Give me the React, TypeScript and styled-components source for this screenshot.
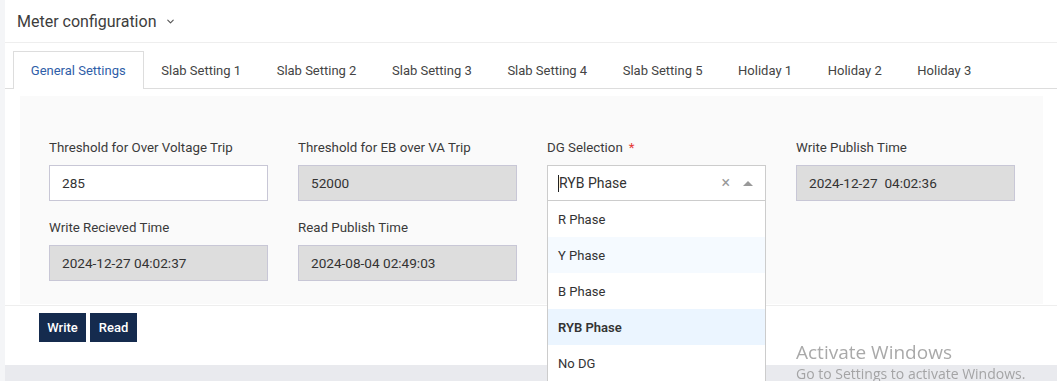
import React from "react";
import styled, { createGlobalStyle } from "styled-components";

const GlobalStyle = createGlobalStyle`
  html, body {
    margin: 0;
    padding: 0;
    background: #f4f5f7;
    font-family: Roboto, "Liberation Sans", Arial, sans-serif;
    overflow: hidden;
  }
  * { box-sizing: border-box; }
`;

const Page = styled.div`
  height: 381px;
  padding-left: 5px;
  background: #f4f5f7;
  display: flex;
  flex-direction: column;
`;

const Card = styled.div`
  background: #ffffff;
  height: 365px;
  flex-shrink: 0;
  display: flex;
  flex-direction: column;
`;

const Footer = styled.div`
  flex: 1;
  background: #e9eaee;
`;

const Header = styled.div`
  height: 43px;
  display: flex;
  align-items: center;
  gap: 9px;
  padding-left: 12px;
  border-bottom: 1px solid #eeeeee;
  font-size: 16px;
  color: #3d3d3d;
`;

const Tabs = styled.div`
  display: flex;
  margin-top: 8px;
  padding-left: 8px;
  border-bottom: 1px solid #dddddd;
`;

const Tab = styled.div<{ $active?: boolean }>`
  height: 38px;
  padding: 0 16.8px;
  display: flex;
  align-items: center;
  font-size: 13px;
  color: ${(p) => (p.$active ? "#2f5ea8" : "#444444")};
  background: ${(p) => (p.$active ? "#ffffff" : "transparent")};
  border: 1px solid ${(p) => (p.$active ? "#dddddd" : "transparent")};
  border-bottom: none;
  margin-bottom: -1px;
`;

const Panel = styled.div`
  margin: 7px 14px 0 15px;
  background: #fafafa;
  padding: 44px 0 23px 29px;
  display: grid;
  grid-template-columns: repeat(4, 219px);
  column-gap: 30px;
  row-gap: 19px;
`;

const Field = styled.div`
  display: flex;
  flex-direction: column;
  position: relative;
`;

const Label = styled.label`
  height: 16px;
  margin-bottom: 9px;
  font-size: 13.3px;
  line-height: 16px;
  color: #3a3a3a;
`;

const Required = styled.span`
  color: #e53935;
  margin-left: 6px;
`;

const Input = styled.div<{ $disabled?: boolean }>`
  height: 36px;
  border: 1px solid #c8c7d6;
  background: ${(p) => (p.$disabled ? "#dddddd" : "#ffffff")};
  padding-left: 12px;
  display: flex;
  align-items: center;
  font-size: 13.6px;
  color: #333333;
  white-space: pre;
`;

const SelectBox = styled.div`
  height: 36px;
  border: 1px solid #cccccc;
  background: #ffffff;
  display: flex;
  align-items: center;
  padding: 0 12px 0 10px;
  font-size: 14px;
  color: #333333;
`;

const Caret = styled.span`
  width: 1px;
  height: 17px;
  background: #222;
`;

const SelectValue = styled.span`
  flex: 1;
`;

const Clear = styled.span`
  color: #999;
  font-size: 16px;
  margin-right: 13px;
  line-height: 1;
`;

const Arrow = styled.span`
  width: 0;
  height: 0;
  border-left: 5px solid transparent;
  border-right: 5px solid transparent;
  border-bottom: 5px solid #999;
`;

const Menu = styled.div`
  position: absolute;
  top: 100%;
  left: 0;
  width: 219px;
  background: #ffffff;
  border: 1px solid #cccccc;
  border-top: none;
  z-index: 10;
`;

const Option = styled.div<{ $focused?: boolean; $selected?: boolean }>`
  height: 36px;
  display: flex;
  align-items: center;
  padding-left: 10px;
  font-size: 13px;
  color: #333333;
  font-weight: ${(p) => (p.$selected ? 600 : 400)};
  background: ${(p) =>
    p.$selected ? "#ebf5ff" : p.$focused ? "#f5faff" : "#ffffff"};
`;

const Actions = styled.div`
  border-top: 1px solid #eeeeee;
  margin-top: 1px;
  padding: 7px 0 0 34px;
  display: flex;
  gap: 4px;
`;

const Button = styled.button`
  height: 29px;
  width: 47px;
  border: none;
  background: #152b4e;
  color: #ffffff;
  font-family: Roboto, "Liberation Sans", Arial, sans-serif;
  font-size: 13px;
  font-weight: 500;
  padding: 0;
`;

const Watermark = styled.div`
  position: fixed;
  left: 796px;
  top: 340px;
  color: rgba(140, 140, 140, 0.75);
  font-family: "Open Sans", "Noto Sans", sans-serif;
  pointer-events: none;
`;

const WatermarkTitle = styled.div`
  font-size: 19px;
  line-height: 24px;
`;

const WatermarkSub = styled.div`
  font-size: 14px;
  line-height: 20px;
`;

const Chevron = () => (
  <svg width="11" height="11" viewBox="0 0 24 24" fill="none" stroke="#555" strokeWidth="2.4" strokeLinecap="round" strokeLinejoin="round">
    <path d="M6 9l6 6 6-6" />
  </svg>
);

const tabs = [
  "General Settings",
  "Slab Setting 1",
  "Slab Setting 2",
  "Slab Setting 3",
  "Slab Setting 4",
  "Slab Setting 5",
  "Holiday 1",
  "Holiday 2",
  "Holiday 3",
];

const options = ["R Phase", "Y Phase", "B Phase", "RYB Phase", "No DG"];

export default function App() {
  return (
    <>
      <GlobalStyle />
      <Page>
        <Card>
          <Header>
            Meter configuration
            <Chevron />
          </Header>
          <Tabs>
            {tabs.map((t, i) => (
              <Tab key={t} $active={i === 0}>
                {t}
              </Tab>
            ))}
          </Tabs>
          <Panel>
            <Field>
              <Label>Threshold for Over Voltage Trip</Label>
              <Input>285</Input>
            </Field>
            <Field>
              <Label>Threshold for EB over VA Trip</Label>
              <Input $disabled>52000</Input>
            </Field>
            <Field>
              <Label>
                DG Selection<Required>*</Required>
              </Label>
              <SelectBox>
                <Caret />
                <SelectValue>RYB Phase</SelectValue>
                <Clear>×</Clear>
                <Arrow />
              </SelectBox>
              <Menu>
                {options.map((o) => (
                  <Option key={o} $focused={o === "Y Phase"} $selected={o === "RYB Phase"}>
                    {o}
                  </Option>
                ))}
              </Menu>
            </Field>
            <Field>
              <Label>Write Publish Time</Label>
              <Input $disabled>{"2024-12-27  04:02:36"}</Input>
            </Field>
            <Field>
              <Label>Write Recieved Time</Label>
              <Input $disabled>2024-12-27 04:02:37</Input>
            </Field>
            <Field>
              <Label>Read Publish Time</Label>
              <Input $disabled>2024-08-04 02:49:03</Input>
            </Field>
          </Panel>
          <Actions>
            <Button>Write</Button>
            <Button>Read</Button>
          </Actions>
        </Card>
        <Footer />
      </Page>
      <Watermark>
        <WatermarkTitle>Activate Windows</WatermarkTitle>
        <WatermarkSub>Go to Settings to activate Windows.</WatermarkSub>
      </Watermark>
    </>
  );
}
